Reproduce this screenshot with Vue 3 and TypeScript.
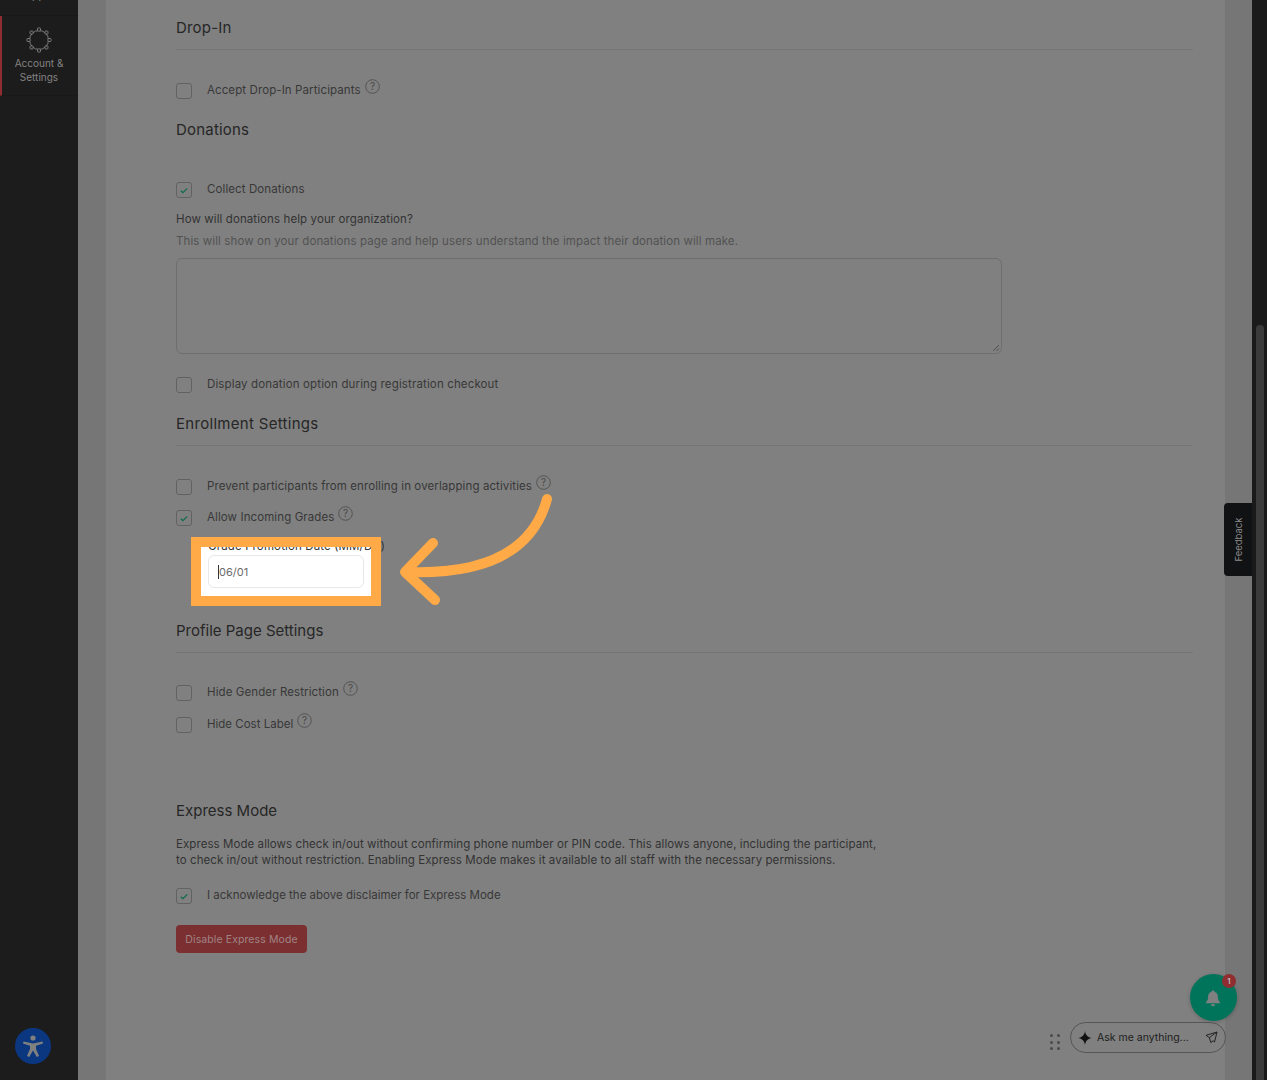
<template>
  <div class="app">
    <aside class="sidebar">
      <div class="nav-cut"><span>Support</span></div>
      <div class="nav-active">
        <svg class="gear" width="26" height="26" viewBox="0 0 26 26" fill="none" stroke="#7c7c7c" stroke-width="1">
          <circle cx="13" cy="13" r="9.5" />
          <rect v-for="d in gearDots" :key="d.x + '-' + d.y" :x="d.x - 1.5" :y="d.y - 1.5" width="3" height="3" rx="0.6" fill="#1c1c1c" />
        </svg>
        <div class="nav-label">Account &amp;<br>Settings</div>
      </div>
      <div class="a11y">
        <svg width="24" height="24" viewBox="0 0 24 24" fill="#808080">
          <circle cx="12" cy="4" r="2.6" />
          <path d="M2.5 7.6 12 9.4l9.5-1.8.5 1.900-7 2.200v3.200L18 22l-2.200.9L12 16.400 8.200 22.900 6 22l3-7.100v-3.200L2 9.500z" />
        </svg>
      </div>
    </aside>

    <main class="gutter">
      <div class="card">
        <h3 class="heading ruled">Drop-In</h3>
        <div class="check-row mt33">
          <span class="box"></span>
          <span class="label">Accept Drop-In Participants</span>
          <svg class="help" width="15" height="15" viewBox="0 0 15 15"><circle cx="7.500" cy="7.500" r="6.800" /><text x="7.500" y="11">?</text></svg>
        </div>

        <h3 class="heading mt21">Donations</h3>
        <div class="check-row mt42">
          <span class="box checked"><svg width="8" height="7" viewBox="0 0 10 8"><path d="M1 4.200 3.700 6.700 9 1.300" /></svg></span>
          <span class="label">Collect Donations</span>
        </div>
        <p class="question">How will donations help your organization?</p>
        <p class="hint">This will show on your donations page and help users understand the impact their donation will make.</p>
        <div class="textarea">
          <svg class="grip" width="8" height="8" viewBox="0 0 8 8"><path d="M1 7 7 1M4.500 7 7 4.500" /></svg>
        </div>
        <div class="check-row mt23">
          <span class="box"></span>
          <span class="label wide">Display donation option during registration checkout</span>
        </div>

        <h3 class="heading ruled mt21 wide">Enrollment Settings</h3>
        <div class="check-row mt33">
          <span class="box"></span>
          <span class="label">Prevent participants from enrolling in overlapping activities</span>
          <svg class="help" width="15" height="15" viewBox="0 0 15 15"><circle cx="7.500" cy="7.500" r="6.800" /><text x="7.500" y="11">?</text></svg>
        </div>
        <div class="check-row mt15">
          <span class="box checked"><svg width="8" height="7" viewBox="0 0 10 8"><path d="M1 4.200 3.700 6.700 9 1.300" /></svg></span>
          <span class="label">Allow Incoming Grades</span>
          <svg class="help" width="15" height="15" viewBox="0 0 15 15"><circle cx="7.500" cy="7.500" r="6.800" /><text x="7.500" y="11">?</text></svg>
        </div>
        <div class="grade">
          <div class="spot-fill"></div>
          <div class="grade-label">Grade Promotion Date (MM/DD)</div>
          <div class="grade-input"><i class="caret"></i>06/01</div>
          <div class="spot-frame"></div>
          <svg class="arrow" width="170" height="125" viewBox="0 0 170 125" fill="none" stroke="#ffaa46" stroke-width="10" stroke-linecap="round" stroke-linejoin="round">
            <path d="M161 14C148 62 106 90 21 87" />
            <path d="M47 58 19 87 49 115" />
          </svg>
        </div>

        <h3 class="heading ruled mt33 tight">Profile Page Settings</h3>
        <div class="check-row mt32">
          <span class="box"></span>
          <span class="label">Hide Gender Restriction</span>
          <svg class="help" width="15" height="15" viewBox="0 0 15 15"><circle cx="7.500" cy="7.500" r="6.800" /><text x="7.500" y="11">?</text></svg>
        </div>
        <div class="check-row mt16">
          <span class="box"></span>
          <span class="label tight">Hide Cost Label</span>
          <svg class="help" width="15" height="15" viewBox="0 0 15 15"><circle cx="7.500" cy="7.500" r="6.800" /><text x="7.500" y="11">?</text></svg>
        </div>

        <h3 class="heading express tight">Express Mode</h3>
        <p class="disclaimer">
          Express Mode allows check in/out without confirming phone number or PIN code. This allows anyone, including the participant,<br>
          to check in/out without restriction. Enabling Express Mode makes it available to all staff with the necessary permissions.
        </p>
        <div class="check-row mt20">
          <span class="box checked"><svg width="8" height="7" viewBox="0 0 10 8"><path d="M1 4.200 3.700 6.700 9 1.300" /></svg></span>
          <span class="label tight">I acknowledge the above disclaimer for Express Mode</span>
        </div>
        <button class="danger" type="button">Disable Express Mode</button>
      </div>
    </main>

    <div class="scrollbar"><div class="thumb"></div></div>

    <div class="feedback"><span>Feedback</span></div>

    <div class="bell">
      <svg width="18" height="18" viewBox="0 0 18 18" fill="#808080">
        <path d="M9 1.500c-.8 0-1.300.5-1.400 1.200C5.400 3.300 4.200 5 4.200 7.300c0 3-.7 4.500-2.200 6v.9h14v-.9c-1.500-1.500-2.200-3-2.200-6 0-2.300-1.200-4-3.400-4.600-.1-.7-.6-1.200-1.400-1.200zM6.900 15.200a2.100 2.100 0 0 0 4.200 0z" />
      </svg>
      <span class="badge">1</span>
    </div>

    <div class="dots"><i v-for="n in 6" :key="n"></i></div>
    <div class="ask">
      <svg width="14" height="14" viewBox="0 0 14 14" fill="#111"><path d="M7 0c.6 4.200 2.600 6.300 7 7-4.400.7-6.400 2.800-7 7-.6-4.200-2.600-6.300-7-7 4.400-.7 6.400-2.800 7-7z" /></svg>
      <span class="ask-text">Ask me anything...</span>
      <svg class="send" width="13" height="13" viewBox="0 0 13 13" fill="none" stroke="#222" stroke-width="1" stroke-linejoin="round"><path d="M12 1 1 4.300l3.400 2.300L5.800 11.500 8.200 9.800 9.500 11zM12 1 4.400 6.600" /></svg>
    </div>
  </div>
</template>

<script setup lang="ts">
// eight little knobs around the settings wheel
const gearDots = Array.from({ length: 8 }, (_, i) => {
  const a = (i * Math.PI) / 4
  return { x: 13 + Math.cos(a) * 10.5, y: 13 + Math.sin(a) * 10.5 }
})
</script>

<style>
html, body {
  margin: 0;
  background: #767676;
  overflow: hidden;
}
</style>

<style scoped>
.app {
  position: relative;
  display: flex;
  width: 1267px;
  height: 1080px;
  overflow: hidden;
  font-family: Inter, "Liberation Sans", sans-serif;
  color: #333;
}

.sidebar {
  position: relative;
  width: 78px;
  flex: none;
  background: #1c1c1c;
}

.nav-cut {
  height: 15px;
  overflow: hidden;
  border-bottom: 1px solid #181818;
  text-align: center;
  font-size: 10.5px;
  line-height: 13px;
  color: #8a8a8a;
}

.nav-cut span {
  display: block;
  margin-top: -11px;
}

.nav-active {
  box-sizing: border-box;
  height: 80px;
  border-left: 2px solid #8f2d31;
  border-bottom: 1px solid #191919;
  padding-top: 11px;
  text-align: center;
  padding-right: 2px;
}

.gear {
  display: block;
  margin: 0 auto 3px;
}

.nav-label {
  font-size: 10px;
  line-height: 14px;
  color: #828282;
}

.a11y {
  position: absolute;
  left: 15px;
  top: 1028px;
  width: 36px;
  height: 36px;
  border-radius: 50%;
  background: #0b3781;
  display: flex;
  align-items: center;
  justify-content: center;
}

.gutter {
  flex: 1;
  padding: 0 27px 0 28px;
  background: #767676;
}

.card {
  box-sizing: border-box;
  height: 1080px;
  padding: 18px 32px 0 70px;
  background: #808080;
}

.heading {
  margin: 0;
  font-size: 15px;
  font-weight: 400;
  line-height: 20px;
  letter-spacing: 0.2px;
  color: #262626;
}

.heading.ruled {
  padding-bottom: 11px;
  border-bottom: 1px solid #757575;
}

.mt15 { margin-top: 15px; }
.mt16 { margin-top: 16px; }
.mt20 { margin-top: 20px; }
.mt21 { margin-top: 21px; }
.mt23 { margin-top: 23px; }
.mt32 { margin-top: 32px; }
.mt33 { margin-top: 33px; }
.mt42 { margin-top: 42px; }

.express { margin-top: 68px; }

.check-row {
  display: flex;
  align-items: flex-start;
  height: 16px;
}

.box {
  box-sizing: border-box;
  width: 16px;
  height: 16px;
  flex: none;
  border: 1px solid #626262;
  border-radius: 3px;
  display: flex;
  align-items: center;
  justify-content: center;
}

.box path {
  fill: none;
  stroke: #0f6b50;
  stroke-width: 1.6;
}

.label {
  margin-left: 15px;
  font-size: 11.5px;
  line-height: 15px;
  letter-spacing: 0.1px;
  color: #383838;
}

.heading.tight,
.label.tight {
  letter-spacing: 0;
}

.label.wide {
  letter-spacing: 0.14px;
}

.heading.wide {
  letter-spacing: 0.3px;
}

.help {
  margin: -4px 0 0 4px;
  flex: none;
}

.help circle {
  fill: none;
  stroke: #4a4a4a;
  stroke-width: 0.8;
}

.help text {
  font-size: 10px;
  text-anchor: middle;
  fill: #4a4a4a;
}

.question {
  margin: 13px 0 0;
  font-size: 11.5px;
  line-height: 16px;
  letter-spacing: 0.1px;
  color: #333;
}

.hint {
  margin: 6px 0 0;
  font-size: 11.5px;
  line-height: 16px;
  letter-spacing: 0.1px;
  color: #525252;
}

.textarea {
  position: relative;
  box-sizing: border-box;
  width: 826px;
  height: 96px;
  margin-top: 9px;
  border: 1px solid #6e6e6e;
  border-radius: 6px;
}

.grip {
  position: absolute;
  right: 1px;
  bottom: 1px;
}

.grip path {
  fill: none;
  stroke: #444;
  stroke-width: 0.8;
}

.grade {
  position: relative;
  margin: 12px 0 0 32px;
  width: 200px;
}

.spot-fill,
.spot-frame {
  position: absolute;
  box-sizing: border-box;
  left: -17px;
  top: -1px;
  width: 190px;
  height: 69px;
}

.spot-fill {
  background: #fff;
}

.spot-frame {
  border: 10px solid #ffaa46;
}

.grade-label {
  position: relative;
  font-size: 11.5px;
  line-height: 16px;
  letter-spacing: 0.13px;
  white-space: nowrap;
  color: #333;
}

.grade-input {
  position: relative;
  box-sizing: border-box;
  width: 156px;
  height: 33px;
  margin-top: 1px;
  padding-left: 10px;
  border: 1px solid #e8e8e8;
  border-radius: 6px;
  background: #fff;
  font-size: 11px;
  line-height: 32px;
  color: #6b6b6b;
}

.caret {
  position: absolute;
  left: 9px;
  top: 9px;
  width: 1px;
  height: 14px;
  background: #333;
}

.arrow {
  position: absolute;
  left: 178px;
  top: -53px;
}

.disclaimer {
  margin: 15px 0 0;
  font-size: 11.5px;
  line-height: 16px;
  letter-spacing: 0.07px;
  white-space: nowrap;
  color: #333;
}

.danger {
  display: block;
  width: 131px;
  height: 28px;
  margin-top: 21px;
  padding: 0;
  border: 0;
  border-radius: 4px;
  background: #7b2f31;
  font-family: inherit;
  font-size: 10.5px;
  letter-spacing: 0.1px;
  color: #a08384;
}

.scrollbar {
  position: relative;
  width: 15px;
  flex: none;
  background: #1a1a1a;
}

.thumb {
  position: absolute;
  left: 4px;
  top: 325px;
  bottom: 0;
  width: 8px;
  border-radius: 4px 4px 0 0;
  background: #3b3b3b;
}

.feedback {
  position: absolute;
  left: 1224px;
  top: 503px;
  width: 28px;
  height: 73px;
  border-radius: 4px 0 0 4px;
  background: #111214;
  display: flex;
  align-items: center;
  justify-content: center;
}

.feedback span {
  transform: rotate(-90deg);
  font-size: 9.5px;
  color: #8c8c8c;
}

.bell {
  position: absolute;
  left: 1190px;
  top: 974px;
  width: 47px;
  height: 47px;
  border-radius: 50%;
  background: #00745a;
  box-shadow: 0 1px 4px rgba(0, 0, 0, 0.2);
  display: flex;
  align-items: center;
  justify-content: center;
}

.bell svg {
  margin-left: -1px;
}

.badge {
  position: absolute;
  left: 32px;
  top: 0;
  width: 14px;
  height: 14px;
  border-radius: 50%;
  background: #8f2d31;
  font-size: 8px;
  font-weight: 600;
  line-height: 14px;
  text-align: center;
  color: #b9b9b9;
}

.dots {
  position: absolute;
  left: 1050px;
  top: 1034px;
  display: grid;
  grid-template-columns: repeat(2, 3px);
  gap: 3.500px 4px;
}

.dots i {
  width: 3px;
  height: 3px;
  border-radius: 50%;
  background: #4a4a4a;
}

.ask {
  position: absolute;
  box-sizing: border-box;
  left: 1070px;
  top: 1022px;
  width: 156px;
  height: 31px;
  padding: 0 7px;
  border: 1px solid #555;
  border-radius: 16px;
  display: flex;
  align-items: center;
  gap: 5px;
  font-size: 10.500px;
  color: #1d1d1d;
}

.ask-text {
  flex: 1;
}
</style>
